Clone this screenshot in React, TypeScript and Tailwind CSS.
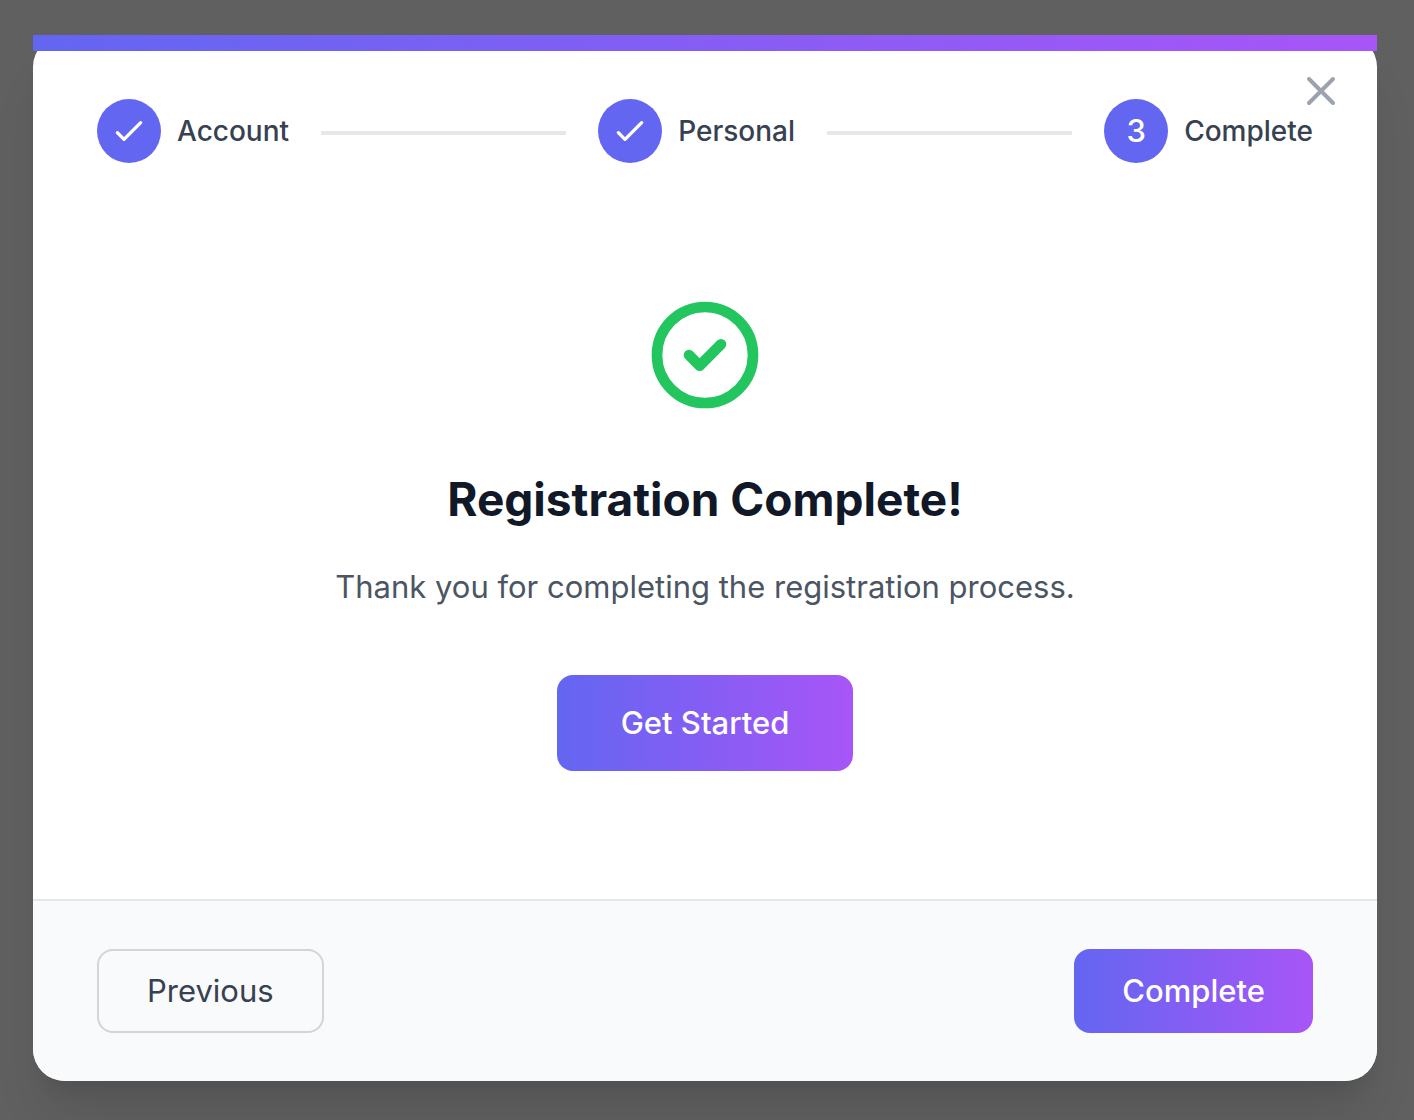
import React from "react";

const steps = [
  { label: "Account", done: true },
  { label: "Personal", done: true },
  { label: "Complete", done: false },
];

function StepMark({ index, done }: { index: number; done: boolean }) {
  return (
    <span className="flex size-16 shrink-0 items-center justify-center rounded-full bg-[#6366f1] text-[31px] font-medium text-white">
      {done ? (
        <svg className="size-10" viewBox="0 0 24 24" fill="none" stroke="currentColor" strokeWidth="2" strokeLinecap="round" strokeLinejoin="round" aria-hidden="true">
          <path d="M5 13l4 4L19 7" />
        </svg>
      ) : (
        index + 1
      )}
    </span>
  );
}

function Stepper() {
  return (
    <ol className="flex items-center justify-between">
      {steps.map((step, i) => (
        <React.Fragment key={step.label}>
          {i > 0 && <li aria-hidden="true" className="mx-8 mt-1 h-1 flex-1 bg-[#e5e7eb]" />}
          <li className="flex items-center gap-4">
            <StepMark index={i} done={step.done} />
            <span className="text-[28px] leading-10 font-medium text-[#374151]">{step.label}</span>
          </li>
        </React.Fragment>
      ))}
    </ol>
  );
}

export default function App() {
  return (
    <main className="min-h-screen bg-[#606060] pt-[35px] pr-[37px] pb-[39px] pl-[33px] font-['Inter',sans-serif]">
      <section role="dialog" aria-labelledby="title" className="relative rounded-[32px] bg-white shadow-[0_40px_50px_-10px_rgba(0,0,0,0.1),0_16px_20px_-12px_rgba(0,0,0,0.1)]">
        <div className="h-4 bg-linear-to-r/srgb from-[#6366f1] to-[#a855f7]" />
        <button type="button" aria-label="Close" className="absolute top-8 right-8 text-[#9ca3af]">
          <svg className="size-12" viewBox="0 0 24 24" fill="none" stroke="currentColor" strokeWidth="2" strokeLinecap="round" strokeLinejoin="round" aria-hidden="true">
            <path d="M6 18L18 6M6 6l12 12" />
          </svg>
        </button>
        <div className="px-16 pt-12">
          <Stepper />
          <div className="flex flex-col items-center py-32 text-center">
            <svg className="size-32 text-[#22c55e]" viewBox="0 0 24 24" fill="none" stroke="currentColor" strokeWidth="2" strokeLinecap="round" strokeLinejoin="round" aria-hidden="true">
              <path d="M9 12l2 2 4-4m6 2a9 9 0 11-18 0 9 9 0 0118 0z" />
            </svg>
            <h1 id="title" className="mt-12 text-[46px] leading-[64px] font-bold text-[#111827]">Registration Complete!</h1>
            <p className="mt-8 text-[31px] leading-[48px] text-[#4b5563]">Thank you for completing the registration process.</p>
            <button type="button" className="mt-16 rounded-2xl bg-linear-to-r/srgb from-[#6366f1] to-[#a855f7] px-16 py-6 text-[31px] leading-[48px] font-medium text-white">Get Started</button>
          </div>
        </div>
        <footer className="flex items-center justify-between rounded-b-[32px] border-t-2 border-[#e5e7eb] bg-[#f9fafb] px-16 py-12">
          <button type="button" className="rounded-2xl border-2 border-[#d1d5db] px-12 py-4 text-[31px] leading-[48px] text-[#374151]">Previous</button>
          <button type="button" className="rounded-2xl bg-linear-to-r/srgb from-[#6366f1] to-[#a855f7] px-12 py-[18px] text-[31px] leading-[48px] font-medium text-white">Complete</button>
        </footer>
      </section>
    </main>
  );
}
